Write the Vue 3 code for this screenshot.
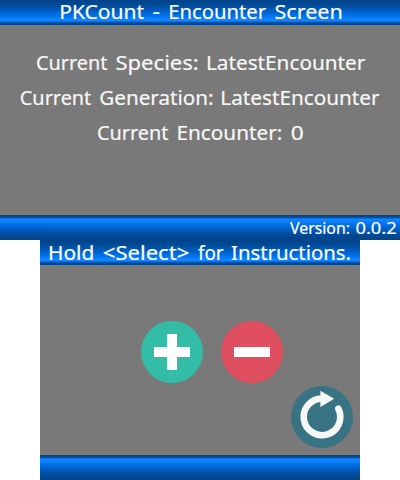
<script setup>
// Each word: text, left edge of its advance box, advance width
const title = [['PKCount', 59.2, 85], ['-', 152.4, 7.5], ['Encounter', 168.2, 97.8], ['Screen', 274.5, 68.3]]
const info = [
  [['Current', 36, 71.5], ['Species:', 115.4, 83.4], ['LatestEncounter', 206, 159.3]],
  [['Current', 19.8, 71.5], ['Generation:', 99.3, 114.3], ['LatestEncounter', 220.3, 159.3]],
  [['Current', 97, 71.5], ['Encounter:', 176.5, 105.8], ['0', 290.7, 13]],
]
const hint = [['Hold', 8, 46.3], ['<Select>', 62.8, 86.5], ['for', 157.9, 25.7], ['Instructions.', 191, 120]]
const version = [['Version:', 290, 60], ['0.0.2', 355.4, 41.3]]
</script>

<template>
  <main class="device">
    <section class="screen upper">
      <header class="bar">
        <svg class="line" width="400" height="25">
          <text v-for="w in title" :key="w[1]" :x="w[1]" y="19" :textLength="w[2]" lengthAdjust="spacingAndGlyphs">{{ w[0] }}</text>
        </svg>
      </header>
      <div class="info">
        <svg v-for="(row, i) in info" :key="i" class="line" width="400" height="35">
          <text v-for="w in row" :key="w[1]" :x="w[1]" y="25" :textLength="w[2]" lengthAdjust="spacingAndGlyphs">{{ w[0] }}</text>
        </svg>
      </div>
      <footer class="bar foot">
        <svg class="line version" width="400" height="25">
          <text v-for="w in version" :key="w[1]" :x="w[1]" y="19" :textLength="w[2]" lengthAdjust="spacingAndGlyphs">{{ w[0] }}</text>
        </svg>
      </footer>
    </section>
    <section class="screen lower">
      <header class="bar">
        <svg class="line" width="320" height="25">
          <text v-for="w in hint" :key="w[1]" :x="w[1]" y="20" :textLength="w[2]" lengthAdjust="spacingAndGlyphs">{{ w[0] }}</text>
        </svg>
      </header>
      <div class="controls">
        <div class="counters">
          <button aria-label="Add">
            <svg class="icon" viewBox="0 0 62 62"><circle cx="31" cy="31" r="31" fill="#34bda6" /><path d="M26 13h10v13h13v10H36v13H26V36H13V26h13z" fill="#fff" /></svg>
          </button>
          <button aria-label="Subtract">
            <svg class="icon" viewBox="0 0 62 62"><circle cx="31" cy="31" r="31" fill="#df4f60" /><path d="M13 26h36v10H13z" fill="#fff" /></svg>
          </button>
        </div>
        <button class="reset" aria-label="Reset">
          <svg class="icon" viewBox="0 0 62 62">
            <circle cx="31" cy="31" r="31" fill="#377383" />
            <path d="M31.1 12.6A18.3 18.3 0 1 0 47.4 22.8" fill="none" stroke="#f7f7f7" stroke-width="6.6" stroke-linecap="round" />
            <path d="M29.4 4.7 43.2 12.7 29.4 21z" fill="#f7f7f7" />
          </svg>
        </button>
      </div>
      <footer class="bar foot"></footer>
    </section>
  </main>
</template>

<style>
body { margin: 0; background: #fff; }
</style>

<style scoped>
.device { width: 400px; height: 480px; font-family: "Noto Sans", sans-serif; }
.screen { height: 240px; display: flex; flex-direction: column; background: #797979; }
.upper { width: 400px; }
.lower { width: 320px; margin: 0 auto; }
.bar { --stops: #00438a 0, #004a97 5px, #0062cc 12px, #0078f5 17px, #1683ff 20px, #1683ff 21px, #005fbf 22px, #004c99 23px, #00448a 25px; height: 25px; flex: none; background: linear-gradient(to bottom, var(--stops)); }
.foot { background: linear-gradient(to top, var(--stops)); }
.line { display: block; overflow: visible; fill: #fff; stroke: #fff; stroke-width: 0.2px; font-size: 20.5px; }
.version { font-size: 16px; }
.info { flex: 1; padding-top: 20px; }
.info .line { fill: #f7f7f7; stroke: #f7f7f7; }
.controls { flex: 1; display: flex; flex-direction: column; }
.counters { display: flex; gap: 18px; padding: 56px 0 0 101px; }
button { width: 62px; height: 62px; padding: 0; border: 0; background: none; flex: none; }
.icon { display: block; width: 62px; height: 62px; }
.reset { align-self: flex-end; margin: 3px 7px 0 0; }
</style>
